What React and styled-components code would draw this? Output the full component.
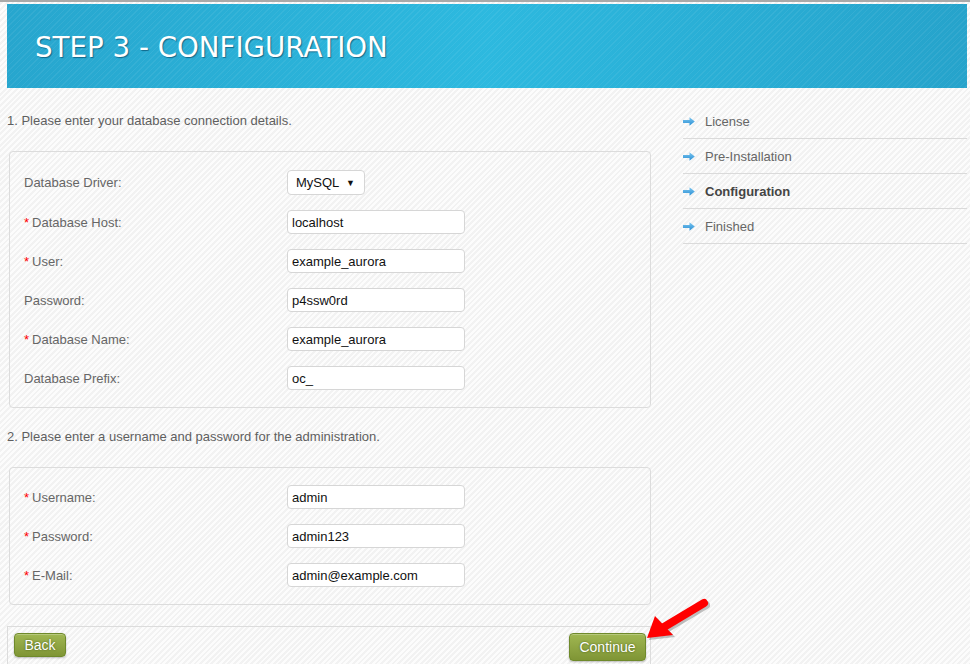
import React from 'react';
import styled, { createGlobalStyle } from 'styled-components';

const GlobalStyle = createGlobalStyle`
  html, body {
    margin: 0;
    padding: 0;
  }
  body {
    font-family: "Liberation Sans", Arial, sans-serif;
    font-size: 13px;
    color: #666;
    background-color: #f5f5f5;
    background-image: repeating-linear-gradient(
      135deg,
      rgba(255, 255, 255, 0.7) 0 2px,
      rgba(0, 0, 0, 0.012) 2px 4px
    );
    min-height: 664px;
  }
`;

const Page = styled.div`
  position: relative;
  width: 970px;
  border-top: 2px solid #a9a9a9;
  padding: 2px 3px 0 7px;
  box-sizing: border-box;
`;

const Header = styled.header`
  height: 84px;
  display: flex;
  align-items: center;
  padding-left: 28px;
  background-image:
    repeating-linear-gradient(135deg, rgba(255, 255, 255, 0.06) 0 1px, transparent 1px 4px),
    linear-gradient(90deg, #27a6ce 0%, #2db9df 50%, #26a3cb 100%);
`;

const Title = styled.h1`
  margin: 0;
  padding-top: 3px;
  font-family: "DejaVu Sans", Verdana, sans-serif;
  font-weight: normal;
  font-size: 27.7px;
  color: #fff;
  text-shadow: 1px 1px 1px rgba(0, 60, 90, 0.6);
`;

const Columns = styled.div`
  display: grid;
  grid-template-columns: 644px 284px;
  column-gap: 32px;
`;

const Main = styled.div`
  display: flex;
  flex-direction: column;
`;

const Intro = styled.p`
  margin: ${p => p.$top}px 0 0;
  line-height: 16px;
  color: #5f5f5f;
`;

const Fieldset = styled.div`
  margin: 22px 0 0 2px;
  border: 1px solid #dcdcdc;
  border-radius: 4px;
  padding: ${p => p.$top}px 14px 17px;
  display: flex;
  flex-direction: column;
  gap: 15px;
`;

const Row = styled.div`
  display: grid;
  grid-template-columns: 263px 178px;
  align-items: center;
  min-height: 24px;
`;

const Label = styled.label`
  color: #666;
`;

const Req = styled.span`
  color: #f00;
  margin-right: 3px;
`;

const Input = styled.input`
  box-sizing: border-box;
  width: 178px;
  height: 24px;
  padding: 0 4px;
  border: 1px solid #d6d6d6;
  border-radius: 4px;
  background: #fff;
  font-family: "Liberation Sans", Arial, sans-serif;
  font-size: 13px;
  color: #111;
  outline: none;
`;

const Select = styled.div`
  box-sizing: border-box;
  width: 78px;
  height: 25px;
  padding: 0 9px 0 8px;
  border: 1px solid #d6d6d6;
  border-radius: 4px;
  background: #fff;
  display: flex;
  align-items: center;
  justify-content: space-between;
  font-size: 13px;
  color: #111;
`;

const Caret = styled.span`
  font-size: 9px;
  color: #111;
`;

const Buttons = styled.div`
  margin-top: 21px;
  border: 1px solid #dcdcdc;
  border-bottom: none;
  padding: 6px 4px 8px 6px;
  display: flex;
  justify-content: space-between;
  align-items: flex-start;
`;

const Button = styled.button`
  box-sizing: border-box;
  height: ${p => (p.$big ? 28 : 24)}px;
  width: ${p => (p.$big ? 77 : 52)}px;
  padding: 0;
  border: 1px solid #6f8a2b;
  border-radius: 4px;
  background: linear-gradient(#a0b752, #7f9535);
  box-shadow: 0 1px 2px rgba(0, 0, 0, 0.25), inset 0 1px 0 rgba(255, 255, 255, 0.25);
  font-family: "Liberation Sans", Arial, sans-serif;
  font-size: 14px;
  color: #fff;
  text-shadow: 0 0 2px rgba(40, 60, 0, 0.7);
  cursor: pointer;
`;

const Side = styled.ul`
  list-style: none;
  margin: 16px 0 0;
  padding: 0;
`;

const Step = styled.li`
  height: 34px;
  border-bottom: 1px solid #dadada;
  display: flex;
  align-items: center;
  gap: 10px;
  font-weight: ${p => (p.$active ? 'bold' : 'normal')};
  color: ${p => (p.$active ? '#444' : '#666')};
`;

const Pointer = styled.svg`
  position: absolute;
  left: 0;
  top: 0;
  pointer-events: none;
`;

const StepArrow = () => (
  <svg width="12" height="9" viewBox="0 0 12 9">
    <defs>
      <linearGradient id="sa" x1="0" y1="0" x2="0" y2="1">
        <stop offset="0" stopColor="#7cc6f0" />
        <stop offset="1" stopColor="#2a8fd4" />
      </linearGradient>
    </defs>
    <path d="M0 3 H6.5 V0.3 L11.8 4.5 L6.5 8.7 V6 H0 Z" fill="url(#sa)" />
  </svg>
);

const dbFields = [
  { label: 'Database Host:', value: 'localhost', req: true },
  { label: 'User:', value: 'example_aurora', req: true },
  { label: 'Password:', value: 'p4ssw0rd' },
  { label: 'Database Name:', value: 'example_aurora', req: true },
  { label: 'Database Prefix:', value: 'oc_' },
];

const adminFields = [
  { label: 'Username:', value: 'admin', req: true },
  { label: 'Password:', value: 'admin123', req: true },
  { label: 'E-Mail:', value: 'admin@example.com', req: true },
];

const steps = ['License', 'Pre-Installation', 'Configuration', 'Finished'];

const Field = ({ label, value, req }) => (
  <Row>
    <Label>
      {req && <Req>*</Req>}
      {label}
    </Label>
    <Input defaultValue={value} />
  </Row>
);

export default function App() {
  return (
    <>
      <GlobalStyle />
      <Page>
        <Header>
          <Title>STEP 3 - CONFIGURATION</Title>
        </Header>
        <Columns>
          <Main>
            <Intro $top={25}>1. Please enter your database connection details.</Intro>
            <Fieldset $top={18}>
              <Row>
                <Label>Database Driver:</Label>
                <Select>
                  <span>MySQL</span>
                  <Caret>▼</Caret>
                </Select>
              </Row>
              {dbFields.map(f => (
                <Field key={f.label} {...f} />
              ))}
            </Fieldset>
            <Intro $top={21}>2. Please enter a username and password for the administration.</Intro>
            <Fieldset $top={17}>
              {adminFields.map(f => (
                <Field key={f.label} {...f} />
              ))}
            </Fieldset>
            <Buttons>
              <Button>Back</Button>
              <Button $big>Continue</Button>
            </Buttons>
          </Main>
          <Side>
            {steps.map(s => (
              <Step key={s} $active={s === 'Configuration'}>
                <StepArrow />
                {s}
              </Step>
            ))}
          </Side>
        </Columns>
        {/* red pointer drawn over the page */}
        <Pointer width="970" height="664" viewBox="0 0 970 664">
          <g transform="translate(2 2)" opacity="0.35">
            <line x1="704" y1="601" x2="664" y2="625" stroke="#555" strokeWidth="8" strokeLinecap="round" />
            <polygon points="647,636 655,614 673,633" fill="#555" />
          </g>
          <line x1="704" y1="601" x2="664" y2="625" stroke="#f00" strokeWidth="8" strokeLinecap="round" />
          <polygon points="647,636 655,614 673,633" fill="#f00" />
        </Pointer>
      </Page>
    </>
  );
}
